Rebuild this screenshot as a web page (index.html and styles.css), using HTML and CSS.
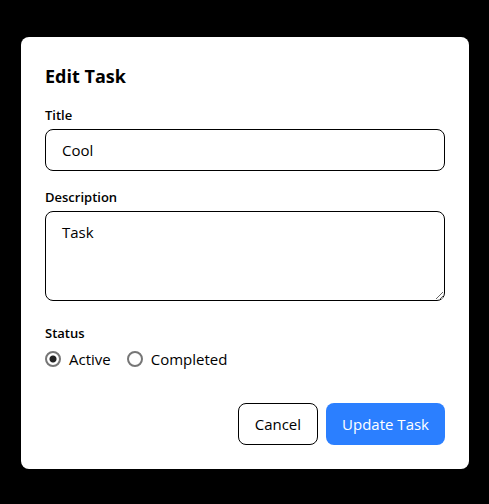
FILE: index.html
```html
<!DOCTYPE html>
<html lang="en">
<head>
<meta charset="utf-8">
<meta name="viewport" content="width=device-width, initial-scale=1">
<title>Edit Task</title>
<link rel="stylesheet" href="styles.css">
</head>
<body>
<main class="backdrop">
  <form class="dialog">
    <h1 class="dialog-title">Edit Task</h1>
    <div class="field">
      <label class="label" for="title">Title</label>
      <input class="control" id="title" type="text" value="Cool">
    </div>
    <div class="field">
      <label class="label" for="description">Description</label>
      <textarea class="control control-area" id="description" rows="3">Task</textarea>
    </div>
    <fieldset class="status">
      <legend class="label">Status</legend>
      <div class="options">
        <label class="option"><input class="radio" type="radio" name="status" checked>Active</label>
        <label class="option"><input class="radio" type="radio" name="status">Completed</label>
      </div>
    </fieldset>
    <div class="actions">
      <button class="button button-outline" type="button">Cancel</button>
      <button class="button button-primary" type="submit">Update Task</button>
    </div>
  </form>
</main>
</body>
</html>
```

FILE: styles.css
```css
* {
  box-sizing: border-box;
}

body {
  margin: 0;
  background: #000;
  color: #000;
  font: 15px/24px "Open Sans", "Noto Sans", sans-serif;
}

.backdrop {
  display: flex;
  align-items: center;
  justify-content: center;
  min-height: 100vh;
  padding: 18px 20px 16px 21px;
}

.dialog {
  width: 100%;
  max-width: 448px;
  padding: 24px;
  border-radius: 8px;
  background: #fff;
}

.dialog-title {
  margin: 0 0 14px;
  font-size: 18px;
  font-weight: 700;
  line-height: 30px;
}

.field {
  display: flex;
  flex-direction: column;
  gap: 4px;
  margin-bottom: 16px;
}

.label {
  padding: 0;
  font-size: 13px;
  font-weight: 600;
  line-height: 20px;
}

.control {
  width: 100%;
  padding: 8px 16px;
  border: 1px solid #000;
  border-radius: 8px;
  background: #fff;
  color: inherit;
  font: inherit;
}

.control-area {
  display: block;
  resize: vertical;
}

.status {
  margin: 22px 0 32px;
  padding: 0;
  border: 0;
}

.options {
  display: flex;
  gap: 16px;
  margin-top: 4px;
}

.option {
  display: flex;
  align-items: center;
  gap: 8px;
}

.radio {
  appearance: none;
  width: 16px;
  height: 16px;
  margin: 0;
  border: 2px solid #767676;
  border-radius: 50%;
}

.radio:checked {
  background: radial-gradient(circle, #222 3px, #fff 4px);
}

.actions {
  display: flex;
  justify-content: flex-end;
  gap: 8px;
}

.button {
  padding: 8px 16px;
  border: 0;
  border-radius: 8px;
  font: inherit;
}

.button-outline {
  border: 1px solid #000;
  background: #fff;
  color: #000;
}

.button-primary {
  background: #2b7fff;
  color: #fff;
}
```
